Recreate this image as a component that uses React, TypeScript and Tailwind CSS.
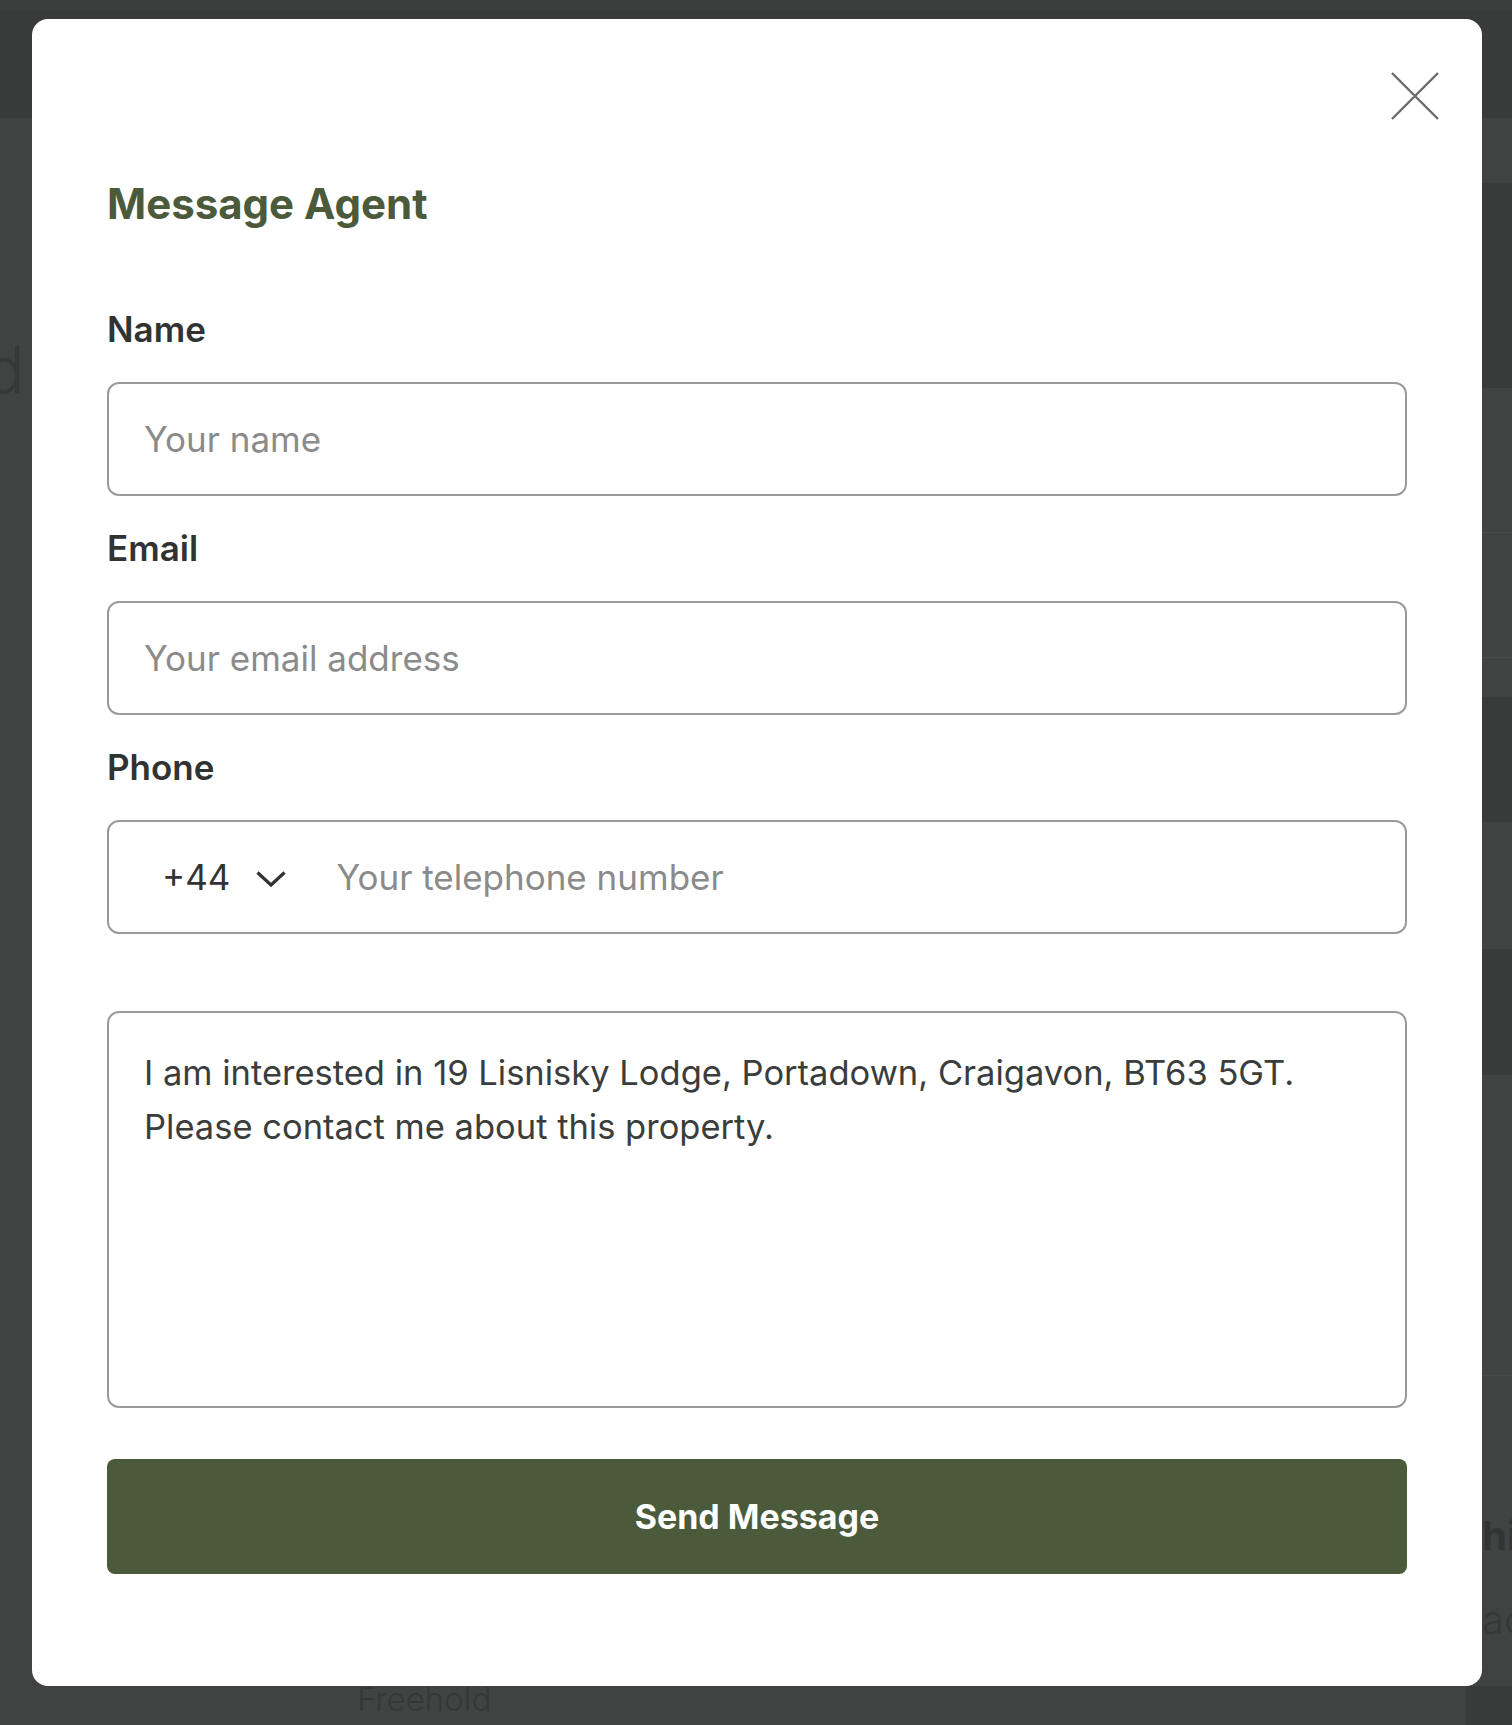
import { useState } from 'react'

const font = '[font-family:Inter,"Noto_Sans",sans-serif]'

function CloseIcon() {
  return (
    <svg width="48" height="48" viewBox="0 0 48 48" fill="none">
      <path d="M1 1L47 47M47 1L1 47" stroke="#6b6b6b" strokeWidth="2.4" />
    </svg>
  )
}

function Chevron() {
  return (
    <svg width="32" height="18" viewBox="0 0 32 18" fill="none">
      <path d="M2.5 2.5L16 15L29.5 2.5" stroke="#333" strokeWidth="3.2" />
    </svg>
  )
}

function Field({ label, children }: { label: string; children: React.ReactNode }) {
  return (
    <div className="flex flex-col gap-[33px]">
      <label className="text-[35px] leading-[40px] font-semibold text-[#303332]">{label}</label>
      {children}
    </div>
  )
}

function BackdropPage() {
  return (
    <div className="flex flex-col h-full">
      <div className="h-[118px] shrink-0 bg-[#393b3a] border-t-[10px] border-[#3c3e3d]" />
      <div className="flex flex-1">
        <div className="flex-1 flex flex-col">
          <div className="pt-[212px] -ml-[14px] text-[64px] leading-[80px] font-light text-[#363837]">d</div>
          <div className="flex-1" />
          <div className="pl-[357px] pb-[8px] text-[33px] leading-[36px] font-light text-[#363837]">Freehold</div>
        </div>
        <div className="w-[46px] shrink-0 flex flex-col">
          <div className="h-[65px] bg-[#404342]" />
          <div className="h-[205px] bg-[#393b3a]" />
          <div className="h-[145px] bg-[#404342] border-b border-[#484b4a]" />
          <div className="h-[125px] bg-[#404342] border-b border-[#484b4a]" />
          <div className="h-[39px] bg-[#404342]" />
          <div className="h-[125px] bg-[#393b3a]" />
          <div className="h-[127px] bg-[#404342]" />
          <div className="h-[126px] bg-[#393b3a]" />
          <div className="h-[301px] bg-[#404342] border-b border-[#484b4a]" />
          <div className="flex-1 flex flex-col bg-[#404342] pl-[16px]">
            <div className="pt-[138px] text-[40px] leading-[44px] font-bold text-[#333534]">hi</div>
            <div className="pt-[40px] text-[40px] leading-[44px] font-light text-[#363837]">ac</div>
            <div className="flex-1" />
            <div className="h-[39px] bg-[#393b3a] -ml-[16px]" />
          </div>
        </div>
      </div>
    </div>
  )
}

export default function App() {
  const [message, setMessage] = useState(
    'I am interested in 19 Lisnisky Lodge, Portadown, Craigavon, BT63 5GT. Please contact me about this property.'
  )

  const inputBox =
    'h-[114px] w-full rounded-[12px] border-2 border-[#9a9a9a] bg-white text-[35px] text-[#333] placeholder:text-[#8b8b8b] outline-none'

  return (
    <div className={`relative h-[1725px] w-full overflow-hidden bg-[#404342] ${font}`}>
      <BackdropPage />

      <div className="absolute inset-0 pl-[32px] pt-[19px]">
        <div className="relative w-[1450px] h-[1667px] rounded-[16px] bg-white px-[75px] pt-[160px] pb-[112px] flex flex-col">
          <button className="absolute top-[53px] right-[43px]" aria-label="Close">
            <CloseIcon />
          </button>

          <h2 className="text-[42px] leading-[50px] font-bold text-[#4b5a3a]">Message Agent</h2>

          <div className="mt-[80px] flex flex-col gap-[32px]">
            <Field label="Name">
              <input className={`${inputBox} pl-[35px]`} placeholder="Your name" />
            </Field>
            <Field label="Email">
              <input className={`${inputBox} pl-[35px]`} placeholder="Your email address" />
            </Field>
            <Field label="Phone">
              <div className="flex items-center h-[114px] w-full rounded-[12px] border-2 border-[#9a9a9a] bg-white">
                <button className="flex items-center gap-[25px] pl-[53px] pr-[49px] text-[35px] text-[#333]">
                  <span>+44</span>
                  <span className="pt-[4px]">
                    <Chevron />
                  </span>
                </button>
                <input
                  className="flex-1 h-full bg-transparent text-[35px] text-[#333] placeholder:text-[#8b8b8b] outline-none"
                  placeholder="Your telephone number"
                />
              </div>
            </Field>
          </div>

          <textarea
            className="mt-[77px] h-[397px] w-full resize-none rounded-[12px] border-2 border-[#9a9a9a] px-[35px] pt-[33px] text-[34.5px] leading-[54px] text-[#3a3d3b] outline-none"
            value={message}
            onChange={e => setMessage(e.target.value)}
          />

          <button className="mt-[51px] h-[115px] w-full rounded-[8px] bg-[#4b5a3a] text-[34px] font-bold text-white">
            Send Message
          </button>
        </div>
      </div>
    </div>
  )
}
